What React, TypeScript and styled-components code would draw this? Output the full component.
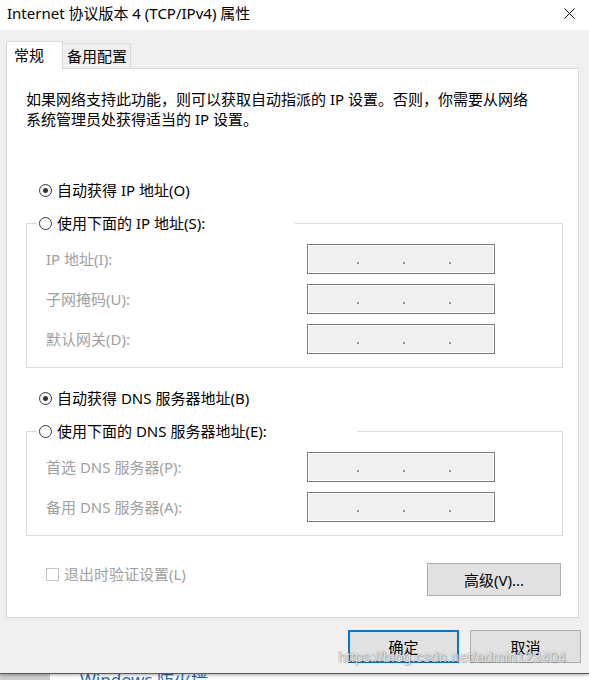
import React from 'react';
import styled, { createGlobalStyle } from 'styled-components';

const FONT = `"Noto Sans", "Noto Sans CJK SC", sans-serif`;

const GlobalStyle = createGlobalStyle`
  html, body { margin: 0; padding: 0; width: 589px; height: 680px; overflow: hidden; background: #fff; }
  body { font-family: ${FONT}; font-size: 15px; color: #000; }
  * { box-sizing: border-box; }
`;

const Page = styled.div`
  display: flex;
  flex-direction: column;
  width: 589px;
  height: 680px;
`;

const Window = styled.div`
  position: relative;
  z-index: 1;
  display: flex;
  flex-direction: column;
  height: 674px;
  background: #f0f0f0;
  border-bottom: 1px solid #5a5a5a;
  box-shadow: 0 1px 3px rgba(0, 0, 0, 0.35);
`;

const TitleBar = styled.div`
  display: flex;
  align-items: center;
  justify-content: space-between;
  height: 30px;
  padding: 0 14px 4px 7px;
  background: #fff;
`;

const Title = styled.div`
  font-size: 15px;
  line-height: 20px;
  white-space: nowrap;
`;

const Body = styled.div`
  display: flex;
  flex-direction: column;
  padding: 11px 10px 0 6px;
`;

const TabStrip = styled.div`
  position: relative;
  z-index: 1;
  display: flex;
  align-items: flex-start;
  height: 28px;
  margin-bottom: -1px;
`;

const Tab = styled.div<{ $active?: boolean; $w: number; $pl: number }>`
  display: flex;
  align-items: center;
  width: ${p => p.$w}px;
  height: ${p => (p.$active ? 28 : 25)}px;
  margin-top: ${p => (p.$active ? 0 : 2)}px;
  margin-left: ${p => (p.$active ? 0 : -1)}px;
  padding-left: ${p => p.$pl}px;
  padding-bottom: ${p => (p.$active ? 2 : 0)}px;
  background: ${p => (p.$active ? '#fff' : '#f0f0f0')};
  border: 1px solid #d9d9d9;
  border-bottom: none;
  font-size: 15px;
  line-height: 20px;
`;

const Panel = styled.div`
  display: flex;
  flex-direction: column;
  height: 550px;
  padding: 21px 15px 0 19px;
  background: #fff;
  border: 1px solid #d9d9d9;
`;

const Desc = styled.p`
  margin: 0;
  font-size: 15px;
  line-height: 19.5px;
`;

const RadioRow = styled.label<{ $mt?: number }>`
  display: flex;
  align-items: center;
  gap: 5px;
  height: 20px;
  margin: ${p => p.$mt ?? 0}px 0 0 13px;
  font-size: 15px;
  line-height: 20px;
  white-space: nowrap;
`;

const RadioCircle = styled.span<{ $checked?: boolean }>`
  display: flex;
  align-items: center;
  justify-content: center;
  flex: none;
  width: 13px;
  height: 13px;
  border: 1px solid #333;
  border-radius: 50%;
  background: #fff;
  &::after {
    content: '';
    display: ${p => (p.$checked ? 'block' : 'none')};
    width: 5px;
    height: 5px;
    border-radius: 50%;
    background: #333;
  }
`;

const Group = styled.fieldset`
  margin: 13px 0 0 0;
  padding: 0;
  min-width: 0;
  border: 1px solid #dcdcdc;
`;

const GroupLegend = styled.legend<{ $w: number }>`
  display: flex;
  align-items: center;
  gap: 5px;
  width: ${p => p.$w}px;
  height: 20px;
  margin-left: 10px;
  padding: 0 0 0 2px;
  font-size: 15px;
  line-height: 20px;
  white-space: nowrap;
`;

const GroupBody = styled.div`
  display: flex;
  flex-direction: column;
  gap: 10px;
  padding: 11px 0 13px 19px;
`;

const FieldRow = styled.div`
  display: grid;
  grid-template-columns: 261px 188px;
  align-items: center;
  height: 30px;
`;

const FieldLabel = styled.span`
  color: #a0a0a0;
  font-size: 15px;
  line-height: 20px;
  white-space: nowrap;
`;

const IpBox = styled.div`
  display: flex;
  align-items: flex-start;
  gap: 44px;
  height: 30px;
  padding: 17px 0 0 49px;
  background: #f0f0f0;
  border: 1px solid #7a7a7a;
  box-shadow: inset 0 0 0 1px #fff;
`;

const Dot = styled.span`
  width: 2px;
  height: 2px;
  background: #8a93a3;
`;

const OptionsRow = styled.div`
  display: flex;
  align-items: flex-start;
  justify-content: space-between;
  margin-top: 27px;
  padding: 0 2px 0 20px;
`;

const CheckRow = styled.label`
  display: flex;
  align-items: center;
  gap: 5px;
  height: 20px;
  margin-top: 1px;
  color: #a0a0a0;
  font-size: 15px;
  line-height: 20px;
`;

const CheckBox = styled.span`
  width: 13px;
  height: 13px;
  border: 1px solid #c4c4c4;
  background: #fff;
`;

const Button = styled.button<{ $default?: boolean; $w: number }>`
  display: flex;
  align-items: center;
  justify-content: center;
  width: ${p => p.$w}px;
  height: 33px;
  padding: 0;
  background: #e1e1e1;
  border: ${p => (p.$default ? '2px solid #0078d7' : '1px solid #adadad')};
  font-family: ${FONT};
  font-size: 15px;
  line-height: 20px;
  color: #000;
`;

const Footer = styled.div`
  display: flex;
  justify-content: flex-end;
  gap: 11px;
  padding: 12px 8px 0 0;
`;

const Watermark = styled.div`
  position: absolute;
  left: 338px;
  top: 648px;
  font-family: "Liberation Sans", Arial, sans-serif;
  font-size: 14.5px;
  line-height: 18px;
  letter-spacing: 0.2px;
  color: rgba(255, 255, 255, 0.8);
  text-shadow: 0 0 1px rgba(0, 0, 0, 0.5), 1px 1px 1px rgba(0, 0, 0, 0.2);
  pointer-events: none;
  white-space: nowrap;
`;

const Backdrop = styled.div`
  display: flex;
  flex: 1;
  overflow: hidden;
`;

const BackSide = styled.div`
  width: 50px;
  background: #cfcfcf;
`;

const BackMain = styled.div`
  flex: 1;
  padding-left: 30px;
  background: #fff;
  overflow: hidden;
`;

const BackLink = styled.span`
  display: block;
  margin-top: -3px;
  color: #1e68c0;
  font-size: 17px;
  line-height: 17px;
  white-space: nowrap;
`;

const CloseIcon = () => (
  <svg width="11" height="11" viewBox="0 0 11 11" aria-label="关闭">
    <path d="M0.5 0.5 L10.5 10.5 M10.5 0.5 L0.5 10.5" stroke="#000" strokeWidth="1" fill="none" />
  </svg>
);

const IpField = () => (
  <IpBox>
    <Dot />
    <Dot />
    <Dot />
  </IpBox>
);

const Field = ({ label }: { label: string }) => (
  <FieldRow>
    <FieldLabel>{label}</FieldLabel>
    <IpField />
  </FieldRow>
);

export default function App() {
  return (
    <>
      <GlobalStyle />
      <Page>
        <Window>
          <TitleBar>
            <Title>Internet 协议版本 4 (TCP/IPv4) 属性</Title>
            <CloseIcon />
          </TitleBar>
          <Body>
            <TabStrip>
              <Tab $active $w={57} $pl={7}>常规</Tab>
              <Tab $w={69} $pl={4}>备用配置</Tab>
            </TabStrip>
            <Panel>
              <Desc>
                如果网络支持此功能，则可以获取自动指派的 IP 设置。否则，你需要从网络
                <br />
                系统管理员处获得适当的 IP 设置。
              </Desc>
              <RadioRow $mt={51}>
                <RadioCircle $checked />
                自动获得 IP 地址(O)
              </RadioRow>
              <Group>
                <GroupLegend $w={258}>
                  <RadioCircle />
                  使用下面的 IP 地址(S):
                </GroupLegend>
                <GroupBody>
                  <Field label="IP 地址(I):" />
                  <Field label="子网掩码(U):" />
                  <Field label="默认网关(D):" />
                </GroupBody>
              </Group>
              <RadioRow $mt={20}>
                <RadioCircle $checked />
                自动获得 DNS 服务器地址(B)
              </RadioRow>
              <Group>
                <GroupLegend $w={320}>
                  <RadioCircle />
                  使用下面的 DNS 服务器地址(E):
                </GroupLegend>
                <GroupBody>
                  <Field label="首选 DNS 服务器(P):" />
                  <Field label="备用 DNS 服务器(A):" />
                </GroupBody>
              </Group>
              <OptionsRow>
                <CheckRow>
                  <CheckBox />
                  退出时验证设置(L)
                </CheckRow>
                <Button $w={134}>高级(V)...</Button>
              </OptionsRow>
            </Panel>
          </Body>
          <Footer>
            <Button $default $w={111}>确定</Button>
            <Button $w={111}>取消</Button>
          </Footer>
          <Watermark>https://blog.csdn.net/admin123404</Watermark>
        </Window>
        <Backdrop>
          <BackSide />
          <BackMain>
            <BackLink>Windows 防火墙</BackLink>
          </BackMain>
        </Backdrop>
      </Page>
    </>
  );
}
